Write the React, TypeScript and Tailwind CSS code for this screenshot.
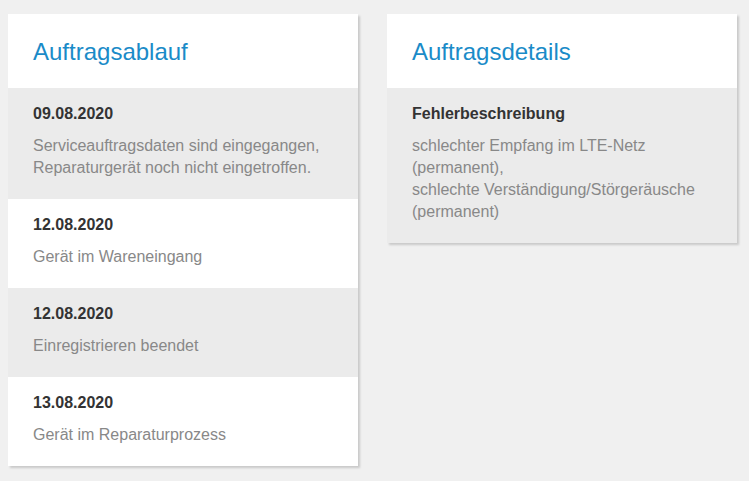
const steps = [
  { date: "09.08.2020", text: ["Serviceauftragsdaten sind eingegangen,", "Reparaturgerät noch nicht eingetroffen."] },
  { date: "12.08.2020", text: ["Gerät im Wareneingang"] },
  { date: "12.08.2020", text: ["Einregistrieren beendet"] },
  { date: "13.08.2020", text: ["Gerät im Reparaturprozess"] },
];

function Card({ title, children }: { title: string; children: React.ReactNode }) {
  return (
    <div className="w-[350px] bg-white shadow-[2px_2px_2px_rgba(0,0,0,0.16)]">
      <div className="h-[74px] px-[25px] pt-[24px]">
        <h2 className="text-[24px] leading-[28px] text-[#1a8bc8]">{title}</h2>
      </div>
      {children}
    </div>
  );
}

function Row({ label, lines, shaded }: { label: string; lines: string[]; shaded: boolean }) {
  return (
    <div className={shaded ? "bg-[#ebebeb] px-[25px] pt-[17px] pb-[20px]" : "bg-white px-[25px] pt-[17px] pb-[20px]"}>
      <div className="text-[16px] font-bold leading-[18px] text-[#333]">{label}</div>
      <div className="mt-[12px] text-[16px] leading-[22px] text-[#888]">
        {lines.map((l, i) => (
          <div key={i}>{l}</div>
        ))}
      </div>
    </div>
  );
}

export default function App() {
  return (
    <div className="min-h-[481px] bg-[#f0f0f0] pl-[8px] pt-[14px] font-['Liberation_Sans',Arial,sans-serif]">
      <div className="flex items-start gap-[29px]">
        <Card title="Auftragsablauf">
          {steps.map((s, i) => (
            <Row key={i} label={s.date} lines={s.text} shaded={i % 2 === 0} />
          ))}
        </Card>
        <Card title="Auftragsdetails">
          <Row
            label="Fehlerbeschreibung"
            shaded
            lines={[
              "schlechter Empfang im LTE-Netz",
              "(permanent),",
              "schlechte Verständigung/Störgeräusche",
              "(permanent)",
            ]}
          />
        </Card>
      </div>
    </div>
  );
}
